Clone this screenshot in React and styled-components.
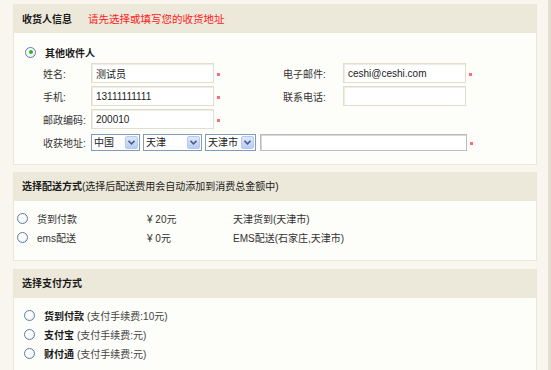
import React from 'react';
import styled, { createGlobalStyle } from 'styled-components';

const GlobalStyle = createGlobalStyle`
  html, body {
    margin: 0;
    padding: 0;
    background: #f8f6ee;
  }
  body {
    font-family: "Liberation Sans", "Noto Sans CJK SC", sans-serif;
    font-size: 10px;
    color: #333;
  }
`;

const Page = styled.div`
  width: 551px;
  height: 370px;
  box-sizing: border-box;
  padding: 4px 11px 0 13px;
  border-right: 3px solid #e4decd;
  overflow: hidden;
`;

const Panel = styled.div`
  border: 1px solid #ebe6d6;
  background: #fdfdfa;
  margin-bottom: ${(p) => p.gap || 7}px;
`;

const PanelHeader = styled.div`
  height: 28px;
  line-height: 28px;
  background: #ece8da;
  padding-left: 8px;
  color: #222;
  white-space: nowrap;
`;

const HeaderTitle = styled.b`
  font-weight: bold;
  color: #1a1a1a;
`;

const Hint = styled.span`
  color: #ff1a1a;
  font-size: 10.5px;
  margin-left: 16px;
`;

const PanelBody = styled.div`
  padding: ${(p) => p.pad};
`;

const Radio = styled.span`
  display: inline-block;
  flex: none;
  width: 11px;
  height: 11px;
  box-sizing: border-box;
  border-radius: 50%;
  border: 1px solid #5d7ea6;
  background: radial-gradient(circle at 40% 40%, #ffffff 30%, #e4e9ee 100%);
  position: relative;
  margin-right: 9px;

  &::after {
    content: '';
    display: ${(p) => (p.checked ? 'block' : 'none')};
    position: absolute;
    left: 2.5px;
    top: 2.5px;
    width: 4px;
    height: 4px;
    border-radius: 50%;
    background: #2fb32f;
  }
`;

const OptionRow = styled.div`
  display: flex;
  align-items: center;
  height: ${(p) => p.h || 19}px;
  padding-left: ${(p) => p.indent}px;
  white-space: nowrap;
`;

const OptionName = styled.span`
  font-weight: bold;
  color: #1a1a1a;
`;

const Note = styled.span`
  color: #444;
  margin-left: 3px;
`;

const FormGrid = styled.div`
  display: grid;
  grid-template-columns: 48px 192px 60px 143px;
  grid-auto-rows: 20px;
  row-gap: 3px;
  padding-left: 29px;
  margin-top: 4px;
  align-items: center;
`;

const Label = styled.label`
  color: #333;
  white-space: nowrap;
`;

const FieldCell = styled.div`
  display: flex;
  align-items: center;
  grid-column: ${(p) => p.span || 'auto'};
  height: ${(p) => p.h || 20}px;
`;

const TextInput = styled.input`
  width: ${(p) => p.w}px;
  height: ${(p) => p.h || 20}px;
  box-sizing: border-box;
  border: 1px solid ${(p) => (p.plain ? '#b9bcc2' : '#e2ddcf')};
  box-shadow: ${(p) => (p.plain ? 'inset 1px 1px 0 #d8d8d8' : 'inset 1px 1px 0 #efece3')};
  background: #fff;
  padding: 0 4px;
  margin: 0;
  font-family: "Liberation Sans", "Noto Sans CJK SC", sans-serif;
  font-size: 10px;
  color: #222;
  outline: none;
`;

const Star = styled.span`
  width: 3px;
  height: 3px;
  background: #ff6b7a;
  margin-left: 3px;
  margin-top: 2px;
  flex: none;
`;

const SelectBox = styled.div`
  display: flex;
  align-items: stretch;
  width: ${(p) => p.w}px;
  height: 17px;
  box-sizing: border-box;
  border: 1px solid #7f9db9;
  background: #fff;
  margin-right: ${(p) => p.mr || 3}px;
  flex: none;
`;

const SelectText = styled.span`
  flex: 1;
  padding-left: 2px;
  line-height: 15px;
  color: #222;
  white-space: nowrap;
  overflow: hidden;
`;

const ArrowButton = styled.span`
  width: 13px;
  margin: 1px;
  border: 1px solid #b6c8f2;
  border-radius: 2px;
  background: linear-gradient(#dfe8fd, #b9cbf5);
  display: flex;
  align-items: center;
  justify-content: center;
  box-sizing: border-box;
`;

const PriceCell = styled.span`
  display: inline-block;
  width: ${(p) => p.w}px;
  color: #333;
`;

function Select({ w, mr, children }) {
  return (
    <SelectBox w={w} mr={mr}>
      <SelectText>{children}</SelectText>
      <ArrowButton>
        <svg width="7" height="5" viewBox="0 0 7 5">
          <path d="M0.5 0.8 L3.5 3.8 L6.5 0.8" fill="none" stroke="#4d6185" strokeWidth="1.6" />
        </svg>
      </ArrowButton>
    </SelectBox>
  );
}

const delivery = [
  { name: '货到付款', price: '¥ 20元', desc: '天津货到(天津市)' },
  { name: 'ems配送', price: '¥ 0元', desc: 'EMS配送(石家庄,天津市)' },
];

const payments = [
  { name: '货到付款', fee: '(支付手续费:10元)' },
  { name: '支付宝', fee: '(支付手续费:元)' },
  { name: '财付通', fee: '(支付手续费:元)' },
];

export default function App() {
  return (
    <>
      <GlobalStyle />
      <Page>
        <Panel>
          <PanelHeader>
            <HeaderTitle>收货人信息</HeaderTitle>
            <Hint>请先选择或填写您的收货地址</Hint>
          </PanelHeader>
          <PanelBody pad="12px 0 12px 0">
            <OptionRow h={14} indent={11}>
              <Radio checked />
              <OptionName>其他收件人</OptionName>
            </OptionRow>
            <FormGrid>
              <Label>姓名:</Label>
              <FieldCell>
                <TextInput w={123} defaultValue="测试员" />
                <Star />
              </FieldCell>
              <Label>电子邮件:</Label>
              <FieldCell>
                <TextInput w={123} defaultValue="ceshi@ceshi.com" />
                <Star />
              </FieldCell>

              <Label>手机:</Label>
              <FieldCell>
                <TextInput w={123} defaultValue="13111111111" />
                <Star />
              </FieldCell>
              <Label>联系电话:</Label>
              <FieldCell>
                <TextInput w={123} defaultValue="" />
              </FieldCell>

              <Label>邮政编码:</Label>
              <FieldCell>
                <TextInput w={123} defaultValue="200010" />
                <Star />
              </FieldCell>
              <span />
              <span />

              <Label>收获地址:</Label>
              <FieldCell span="2 / 5" h={17}>
                <Select w={49}>中国</Select>
                <Select w={59}>天津</Select>
                <Select w={51} mr={4}>天津市</Select>
                <TextInput w={207} h={17} plain defaultValue="" />
                <Star />
              </FieldCell>
            </FormGrid>
          </PanelBody>
        </Panel>

        <Panel gap={8}>
          <PanelHeader>
            <HeaderTitle>选择配送方式</HeaderTitle>
            (选择后配送费用会自动添加到消费总金额中)
          </PanelHeader>
          <PanelBody pad="8px 0 13px 0">
            {delivery.map((d) => (
              <OptionRow key={d.name} indent={3}>
                <Radio />
                <PriceCell w={110}>{d.name}</PriceCell>
                <PriceCell w={86}>{d.price}</PriceCell>
                <span>{d.desc}</span>
              </OptionRow>
            ))}
          </PanelBody>
        </Panel>

        <Panel>
          <PanelHeader>
            <HeaderTitle>选择支付方式</HeaderTitle>
          </PanelHeader>
          <PanelBody pad="8px 0 14px 0">
            {payments.map((p) => (
              <OptionRow key={p.name} indent={10}>
                <Radio />
                <OptionName>{p.name}</OptionName>
                <Note>{p.fee}</Note>
              </OptionRow>
            ))}
          </PanelBody>
        </Panel>
      </Page>
    </>
  );
}
